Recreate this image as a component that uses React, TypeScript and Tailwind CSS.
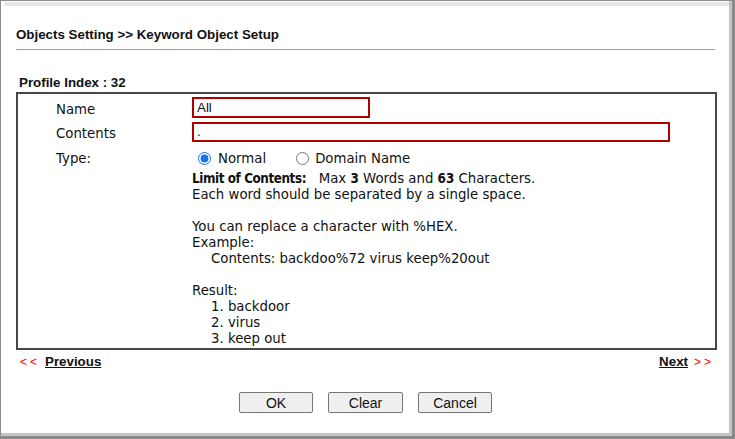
import React from "react";

const body = { fontFamily: '"DejaVu Sans", Tahoma, sans-serif' };
const bold = { fontFamily: '"DejaVu Sans Condensed", "DejaVu Sans", Tahoma, sans-serif', fontStretch: "condensed" as const };
const arial = { fontFamily: '"Liberation Sans", Arial, sans-serif' };

export default function App() {
  return (
    <div className="w-[735px] h-[439px] bg-white overflow-hidden">
      <div className="w-[735px] h-[439px] border-t border-l border-[#8a8a8a] border-r-[3px] border-b-[3px] border-r-[#8a8a8a] border-b-[#8a8a8a]">
        <div className="h-full border-r-[3px] border-b-[3px] border-[#c4c4c4] flex flex-col">
          <div className="mt-px ml-[3px] mr-0 h-[4px] bg-[#e6e6e6]" />
          <div className="mt-[21px] ml-[15px] h-[16px] leading-[16px] text-[13.33px] font-bold text-[#111]" style={arial}>
            Objects Setting &gt;&gt; Keyword Object Setup
          </div>
          <div className="mt-[6px] ml-[15px] w-[699px] h-px bg-[#9a9a9a]" />
          <div className="mt-[25px] ml-[18px] h-[16px] leading-[16px] text-[13.33px] font-bold text-[#111]" style={arial}>
            Profile Index : 32
          </div>
          <div className="mt-[1px] ml-[15px] w-[701px] h-[258px] border-2 border-[#474747] text-[13.3px] text-[#111] pt-[3px]" style={body}>
            <div className="flex items-center h-[21px]">
              <div className="w-[174px] pl-[38px] pt-[4px]">Name</div>
              <div className="w-[178px] h-[21px] border-2 border-[#b00000] pl-[3px] text-[13.33px] leading-[17px]" style={arial}>All</div>
            </div>
            <div className="flex items-center h-[20px] mt-[4px]">
              <div className="w-[174px] pl-[38px] pt-[4px]">Contents</div>
              <div className="w-[478px] h-[20px] border-2 border-[#b00000] pl-[3px] text-[13.33px] leading-[16px]" style={arial}>.</div>
            </div>
            <div className="flex h-[16px] leading-[16px] mt-[8px]">
              <div className="w-[174px] pl-[38px] translate-y-[1px]">Type:</div>
              <label className="flex items-center">
                <input type="radio" name="t" defaultChecked className="ml-[6px] w-[13px] h-[13px] accent-[#1a73e8]" />
                <span className="ml-[7px] translate-y-[1px]">Normal</span>
              </label>
              <label className="flex items-center ml-[30px]">
                <input type="radio" name="t" className="w-[13px] h-[13px]" />
                <span className="ml-[6px] translate-y-[1px]">Domain Name</span>
              </label>
            </div>
            <div className="mt-[5px] ml-[174px] leading-[16px]">
              <div>
                <b style={bold} className="tracking-[-0.4px]">Limit of Contents:</b>&nbsp;&nbsp; Max <b style={bold}>3</b> Words and <b style={bold}>63</b> Characters.
              </div>
              <div>Each word should be separated by a single space.</div>
              <div className="h-[16px]" />
              <div>You can replace a character with %HEX.</div>
              <div>Example:</div>
              <div className="pl-[19px]">Contents: backdoo%72 virus keep%20out</div>
              <div className="h-[16px]" />
              <div>Result:</div>
              <div className="pl-[19px]">1. backdoor</div>
              <div className="pl-[19px]">2. virus</div>
              <div className="pl-[19px]">3. keep out</div>
            </div>
          </div>
          <div className="mt-[4px] ml-[19px] w-[694px] flex justify-between items-center h-[16px] leading-[16px]" style={arial}>
            <div className="flex items-center">
              <span className="text-[#ff0000] text-[12px] tracking-[3px]">&lt;&lt;</span>
              <span className="ml-[5px] text-[13.33px] font-bold underline text-[#111]">Previous</span>
            </div>
            <div className="flex items-center">
              <span className="text-[13.33px] font-bold underline text-[#111]">Next</span>
              <span className="ml-[6px] text-[#ff0000] text-[12px] tracking-[3px]">&gt;&gt;</span>
            </div>
          </div>
          <div className="mt-[22px] ml-[238px] flex gap-[15px]" style={arial}>
            <button className="w-[74px] h-[21px] bg-[#efefef] border border-[#767676] rounded-[2px] text-[14px] text-[#111]">OK</button>
            <button className="w-[75px] h-[21px] bg-[#efefef] border border-[#767676] rounded-[2px] text-[14px] text-[#111]">Clear</button>
            <button className="w-[74px] h-[21px] bg-[#efefef] border border-[#767676] rounded-[2px] text-[14px] text-[#111]">Cancel</button>
          </div>
        </div>
      </div>
    </div>
  );
}
